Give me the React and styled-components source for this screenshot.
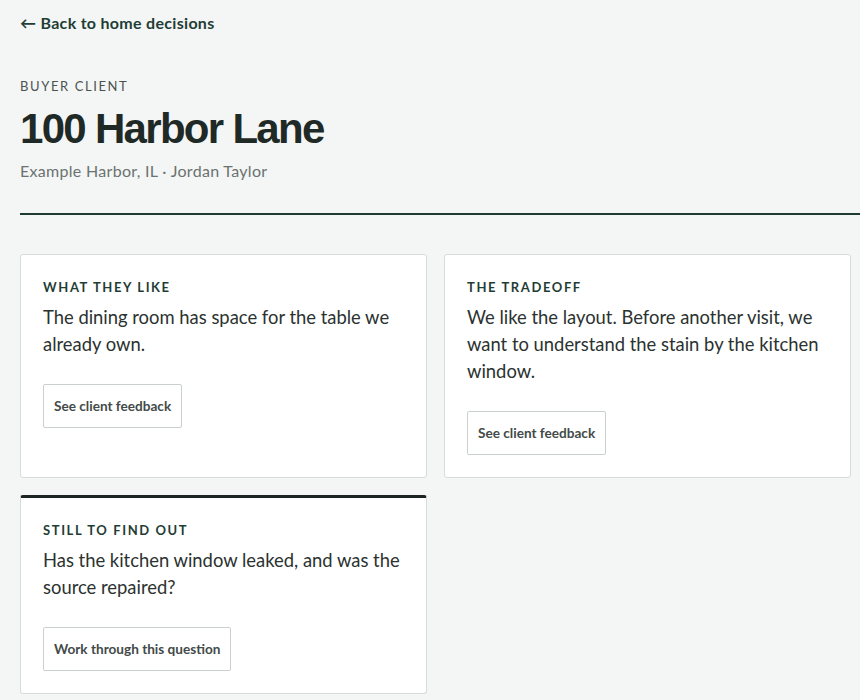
import React from 'react';
import styled, { createGlobalStyle } from 'styled-components';

const GlobalStyle = createGlobalStyle`
  html, body {
    margin: 0;
    padding: 0;
    background: #f4f6f5;
  }
  body {
    font-family: Lato, 'Noto Sans', sans-serif;
    color: #1f2a27;
  }
  * {
    box-sizing: border-box;
  }
`;

const cards = [
  {
    label: 'What they like',
    body: 'The dining room has space for the table we already own.',
    action: 'See client feedback',
  },
  {
    label: 'The tradeoff',
    body: 'We like the layout. Before another visit, we want to understand the stain by the kitchen window.',
    action: 'See client feedback',
  },
  {
    label: 'Still to find out',
    body: 'Has the kitchen window leaked, and was the source repaired?',
    action: 'Work through this question',
    open: true,
  },
];

const App = () => {
  return (
    <Page>
      <GlobalStyle />
      <BackLink href="#">← Back to home decisions</BackLink>
      <Header>
        <Eyebrow>Buyer client</Eyebrow>
        <Title>100 Harbor Lane</Title>
        <Meta>Example Harbor, IL · Jordan Taylor</Meta>
      </Header>
      <Grid>
        {cards.map(card => (
          <Card key={card.label} open={card.open}>
            <Label>{card.label}</Label>
            <Body>{card.body}</Body>
            <Action>{card.action}</Action>
          </Card>
        ))}
      </Grid>
    </Page>
  );
};

const Page = styled.main`
  padding: 13px 0 20px 20px;
`;

const BackLink = styled.a`
  display: inline-block;
  font-size: 16px;
  font-weight: 700;
  letter-spacing: 0.3px;
  color: #1f3d35;
  text-decoration: none;
  line-height: 20px;
`;

const Header = styled.header`
  margin-top: 45px;
  padding-bottom: 32px;
  border-bottom: 2px solid #1f3a33;
`;

const Eyebrow = styled.div`
  font-size: 13px;
  letter-spacing: 1.6px;
  text-transform: uppercase;
  color: #4b5351;
  line-height: 16px;
`;

const Title = styled.h1`
  margin: 10px 0 0;
  font-family: 'Liberation Sans', Arial, sans-serif;
  font-size: 42px;
  font-weight: 700;
  letter-spacing: -1.7px;
  line-height: 50px;
  color: #1f2a27;
`;

const Meta = styled.div`
  margin-top: 7px;
  font-size: 16px;
  letter-spacing: 0.3px;
  color: #6b7270;
  line-height: 20px;
`;

const Grid = styled.section`
  display: grid;
  grid-template-columns: 1fr 1fr;
  gap: 17px;
  margin: 39px 9px 0 0;
`;

const Card = styled.article`
  background: #fff;
  border: 1px solid #d6dcda;
  border-top: ${props => (props.open ? '3px solid #1c2523' : '1px solid #d6dcda')};
  border-radius: 3px;
  padding: 24px 22px 22px;
`;

const Label = styled.div`
  font-size: 13px;
  font-weight: 700;
  letter-spacing: 1.6px;
  text-transform: uppercase;
  color: #1f3d35;
  line-height: 16px;
`;

const Body = styled.p`
  margin: 9px 0 0;
  font-size: 18.4px;
  line-height: 27px;
  color: #2b3230;
`;

const Action = styled.button`
  margin-top: 26px;
  height: 44px;
  padding: 0 10px;
  background: #fff;
  border: 1px solid #c9d0ce;
  border-radius: 2px;
  font-family: Lato, 'Noto Sans', sans-serif;
  font-size: 13.6px;
  font-weight: 700;
  color: #434a48;
  cursor: pointer;
`;

export default App;
